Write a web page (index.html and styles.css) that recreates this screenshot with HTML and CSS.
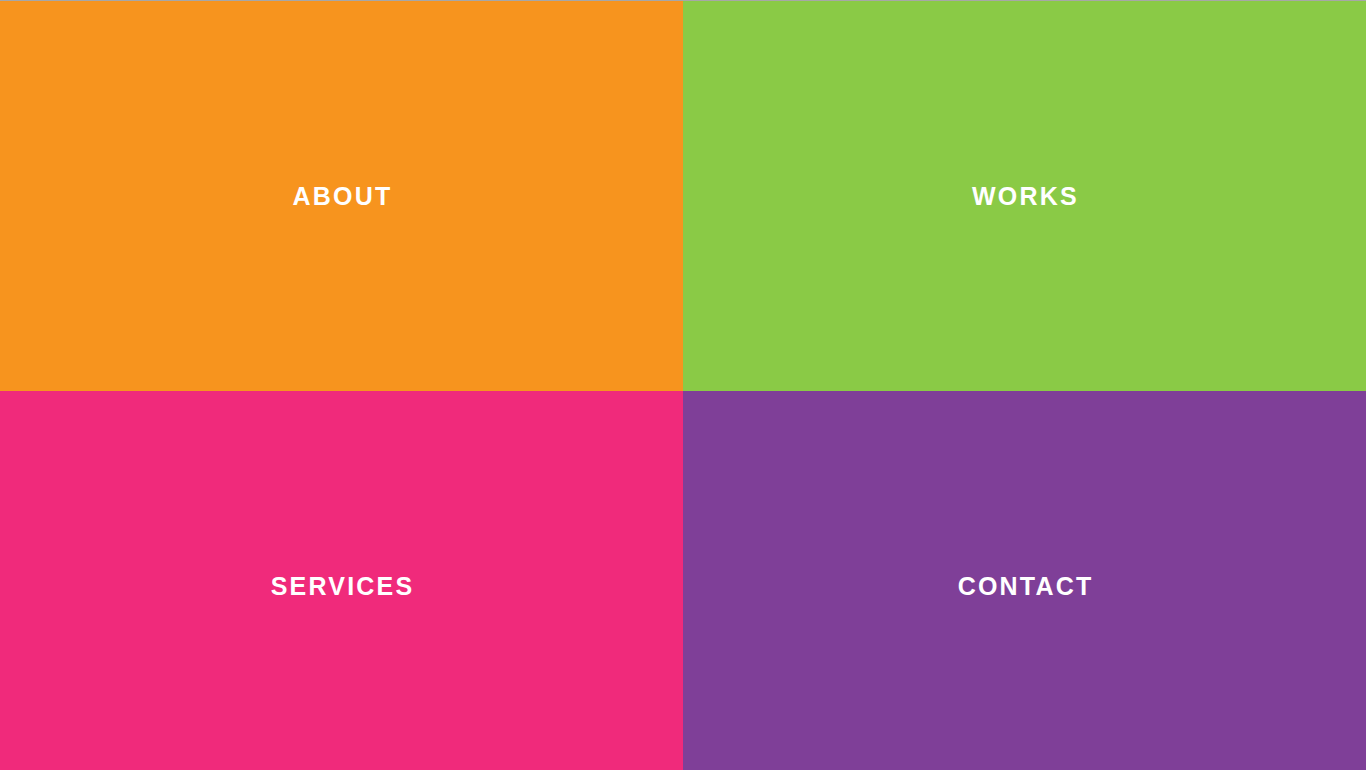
FILE: index.html
```html
<!DOCTYPE html>
<html lang="en">
<head>
<meta charset="utf-8">
<title>Menu</title>
<link rel="stylesheet" href="styles.css">
</head>
<body>
<nav class="tiles">
  <a class="tile about" href="#">ABOUT</a>
  <a class="tile works" href="#">WORKS</a>
  <a class="tile services" href="#">SERVICES</a>
  <a class="tile contact" href="#">CONTACT</a>
</nav>
</body>
</html>
```
FILE: styles.css
```css
html, body {
  margin: 0;
  padding: 0;
  overflow: hidden;
}
body {
  border-top: 1px solid #a7a7a7;
  font-family: "Liberation Sans", Arial, sans-serif;
}
.tiles {
  display: grid;
  grid-template-columns: 1fr 1fr;
  grid-auto-rows: 390px;
}
.tile {
  display: flex;
  align-items: center;
  justify-content: center;
  color: #fff;
  text-decoration: none;
  font-weight: bold;
  font-size: 25px;
  letter-spacing: 2.2px;
  padding-left: 2px;
}
.about { background: #f7941e; }
.works { background: #8aca46; }
.services { background: #f02a7b; }
.contact { background: #7f3f98; }
```
